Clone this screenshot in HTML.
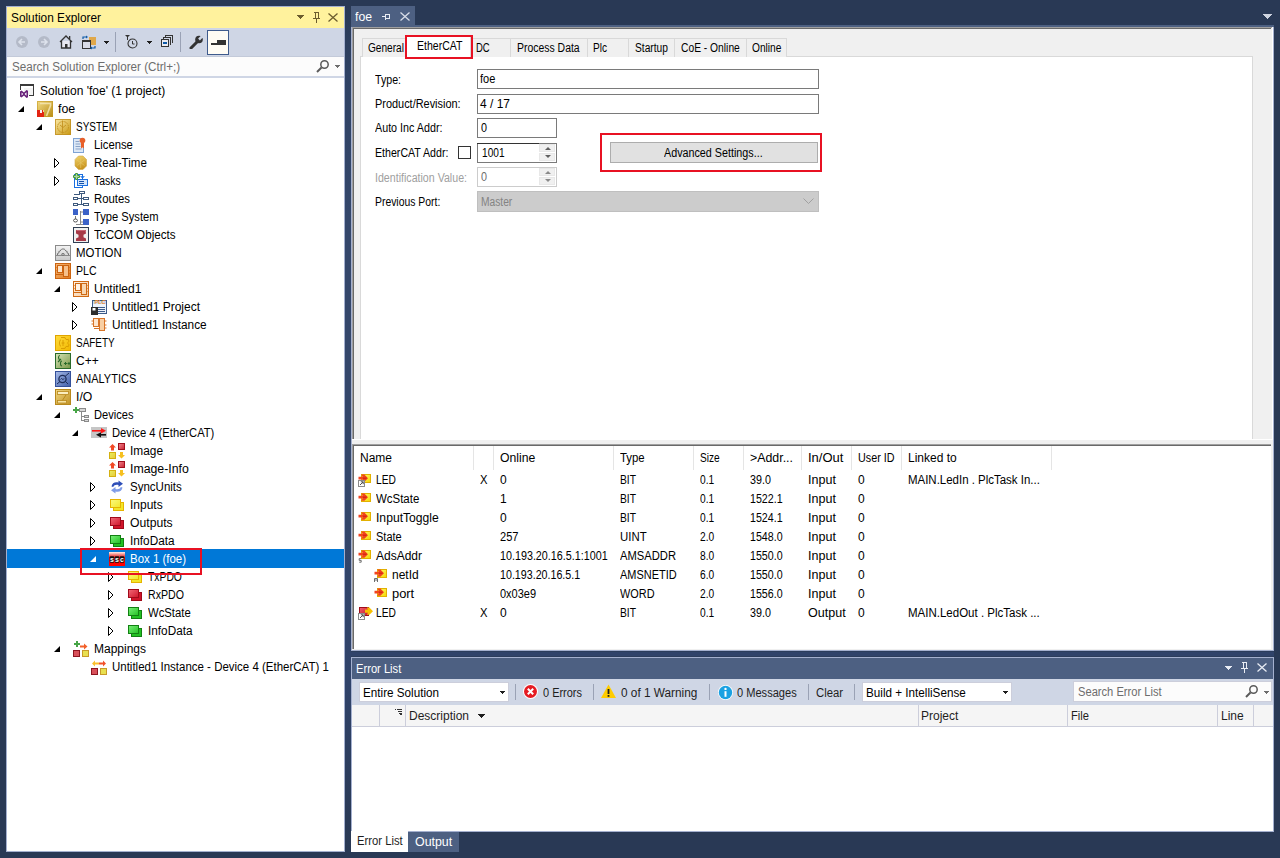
<!DOCTYPE html>
<html><head><meta charset="utf-8"><style>
html,body{margin:0;padding:0;width:1280px;height:858px;overflow:hidden;background:#293955;font-family:"Liberation Sans",sans-serif;}
.t{position:absolute;white-space:nowrap;}
svg{display:block}
</style></head><body>
<div style="position:absolute;left:6px;top:6px;width:339px;height:846px;background:#a4b0cf"></div><div style="position:absolute;left:7px;top:7px;width:337px;height:21px;background:#fff29d"></div><div class="t" style="left:11px;top:9px;font-size:12px;line-height:18px;color:#000;transform:scaleX(0.985);transform-origin:0 0;">Solution Explorer</div><div style="position:absolute;left:296px;top:15px;line-height:0"><svg width="8" height="5" viewBox="0 0 8 5" shape-rendering="crispEdges"><path d="M0 0h8l-4 4z" fill="#6b5c2e"/></svg></div><div style="position:absolute;left:313px;top:12px;line-height:0"><svg width="8" height="11" viewBox="0 0 8 11" shape-rendering="crispEdges"><path d="M2 0h4v1h-0.5v5h1.5v1H0V6h1.5V1H1V0z" fill="#6b5c2e"/><rect x="3" y="7" width="1" height="4" fill="#6b5c2e"/><rect x="2.5" y="1" width="3" height="5" fill="#fff29d"/><rect x="4.5" y="1" width="1" height="5" fill="#6b5c2e"/></svg></div><div style="position:absolute;left:328px;top:13px;line-height:0"><svg width="10" height="9" viewBox="0 0 10 9" shape-rendering="auto"><path d="M0.5 0.5l9 8M9.5 0.5l-9 8" stroke="#6b5c2e" stroke-width="1.3" fill="none"/></svg></div><div style="position:absolute;left:7px;top:28px;width:337px;height:28px;background:#cfd6e5"></div><div style="position:absolute;left:16px;top:36px;line-height:0"><svg width="12" height="12" viewBox="0 0 12 12" shape-rendering="auto"><circle cx="6" cy="6" r="6" fill="#b4bac8"/><path d="M9 6H3.5M6 3L3 6l3 3" stroke="#dde2ec" stroke-width="1.6" fill="none"/></svg></div><div style="position:absolute;left:38px;top:36px;line-height:0"><svg width="12" height="12" viewBox="0 0 12 12" shape-rendering="auto"><circle cx="6" cy="6" r="6" fill="#b4bac8"/><path d="M3 6h5.5M6 3l3 3-3 3" stroke="#dde2ec" stroke-width="1.6" fill="none"/></svg></div><div style="position:absolute;left:59px;top:35px;line-height:0"><svg width="14" height="14" viewBox="0 0 14 14" shape-rendering="auto"><path d="M1 7L7 1l6 6" stroke="#333" stroke-width="1.3" fill="none"/><path d="M2.5 6v7h9V6" fill="#e8e8f0" stroke="#333" stroke-width="1.3"/><rect x="6" y="9" width="2.5" height="4" fill="#333"/><rect x="10" y="1" width="1.3" height="3" fill="#333"/></svg></div><div style="position:absolute;left:82px;top:35px;line-height:0"><svg width="14" height="15" viewBox="0 0 14 15" shape-rendering="auto"><rect x="0.5" y="5.5" width="8" height="8" fill="#d8dbe6" stroke="#333"/><rect x="0.5" y="5.5" width="8" height="1.5" fill="#333"/><path d="M7 2h7v8H9V5H7z" fill="#e0a84a"/><path d="M1 4V2h3" stroke="#0e5aa7" stroke-width="1.2" fill="none"/><path d="M4 0.5l2 1.5-2 1.5z" fill="#0e5aa7"/><path d="M13 11v2h-3" stroke="#0e5aa7" stroke-width="1.2" fill="none"/><path d="M10 11.5l-2 1.5 2 1.5z" fill="#0e5aa7"/></svg></div><div style="position:absolute;left:103px;top:41px;line-height:0"><svg width="6" height="3" viewBox="0 0 6 3" shape-rendering="crispEdges"><path d="M0 0h6l-3 3z" fill="#1e1e1e"/></svg></div><div style="position:absolute;left:115px;top:32px;width:1px;height:20px;background:#9aa2b5"></div><div style="position:absolute;left:125px;top:35px;line-height:0"><svg width="14" height="14" viewBox="0 0 14 14" shape-rendering="auto"><path d="M0 0h5l-2.5 2.5z" fill="#333"/><rect x="2" y="2" width="1" height="3" fill="#333"/><circle cx="7.5" cy="8.5" r="4.5" fill="none" stroke="#333" stroke-width="1.1"/><path d="M7.5 6v3h2" stroke="#333" fill="none"/></svg></div><div style="position:absolute;left:146px;top:41px;line-height:0"><svg width="6" height="3" viewBox="0 0 6 3" shape-rendering="crispEdges"><path d="M0 0h6l-3 3z" fill="#1e1e1e"/></svg></div><div style="position:absolute;left:161px;top:35px;line-height:0"><svg width="12" height="12" viewBox="0 0 12 12" shape-rendering="crispEdges"><rect x="0.5" y="4.5" width="7" height="7" fill="#e8eaf2" stroke="#333"/><path d="M2.5 3.5V2.5h7v7h-1M4.5 1.5V0.5h7v7h-1" stroke="#333" fill="none"/><rect x="2" y="7" width="4" height="1.5" fill="#0e5aa7"/></svg></div><div style="position:absolute;left:180px;top:32px;width:1px;height:20px;background:#9aa2b5"></div><div style="position:absolute;left:189px;top:35px;line-height:0"><svg width="14" height="14" viewBox="0 0 14 14" shape-rendering="auto"><path d="M2 13l6-6" stroke="#333" stroke-width="3" stroke-linecap="round"/><circle cx="10" cy="4.5" r="3.8" fill="#333"/><path d="M10 4.5l4-4" stroke="#cfd6e5" stroke-width="2.5"/></svg></div><div style="position:absolute;left:207px;top:30px;width:20px;height:23px;background:#fffcf4;border:1px solid #3f5b8c"></div><div style="position:absolute;left:211px;top:40px;line-height:0"><svg width="15" height="5" viewBox="0 0 15 5" shape-rendering="crispEdges"><rect x="0" y="3" width="15" height="1.5" fill="#333"/><rect x="6" y="0" width="9" height="4" fill="#333"/></svg></div><div style="position:absolute;left:7px;top:56px;width:337px;height:1px;background:#c3cad9"></div><div style="position:absolute;left:7px;top:57px;width:337px;height:19px;background:#fcfcfc"></div><div class="t" style="left:12px;top:58px;font-size:12px;line-height:18px;color:#6d6d6d;transform:scaleX(0.971);transform-origin:0 0;">Search Solution Explorer (Ctrl+;)</div><div style="position:absolute;left:316px;top:60px;line-height:0"><svg width="13" height="13" viewBox="0 0 13 13" shape-rendering="auto"><circle cx="8.5" cy="4.5" r="3.7" fill="none" stroke="#5a5a5a" stroke-width="1.5"/><path d="M1 12l4.5-4.5" stroke="#5a5a5a" stroke-width="2"/></svg></div><div style="position:absolute;left:334px;top:65px;line-height:0"><svg width="6" height="3" viewBox="0 0 6 3" shape-rendering="crispEdges"><path d="M0 0h6l-3 3z" fill="#6d6d6d"/></svg></div><div style="position:absolute;left:7px;top:76px;width:337px;height:2px;background:#cfd6e5"></div><div style="position:absolute;left:7px;top:78px;width:337px;height:773px;background:#fff"></div><div style="position:absolute;left:20px;top:84px;line-height:0"><svg width="14" height="14" viewBox="0 0 14 14"><rect x="4" y="4" width="9" height="7" fill="#f3f3f3"/><rect x="0" y="0" width="14" height="2" fill="#3a3a3a"/><rect x="0" y="2" width="1" height="4" fill="#3a3a3a"/><rect x="13" y="2" width="1" height="10" fill="#3a3a3a"/><rect x="9" y="11" width="5" height="1" fill="#3a3a3a"/><path d="M0 7.5L1.5 6.5 4 8.5 6.5 6 8 6.8V13.2L6.5 14 4 11.5 1.5 13.5 0 12.5z" fill="#68217a"/><path d="M1.6 8.4v3.2l1.6-1.6zM6.5 8.2v3.6L4.6 10z" fill="#fff"/></svg></div><div class="t" style="left:40px;top:82px;font-size:12px;line-height:18px;color:#000;">Solution 'foe' (1 project)</div><div style="position:absolute;left:18px;top:106px;line-height:0"><svg width="6" height="6" viewBox="0 0 6 6" shape-rendering="auto"><path d="M6 0v6H0z" fill="#000"/></svg></div><div style="position:absolute;left:37px;top:101px;line-height:0"><svg width="16" height="16" viewBox="0 0 16 16"><defs><linearGradient id="g1" x1="0" y1="0" x2="1" y2="1"><stop offset="0" stop-color="#f3dc86"/><stop offset="1" stop-color="#b78a12"/></linearGradient></defs><rect x="0" y="0" width="16" height="16" fill="url(#g1)"/><rect x="0.5" y="0.5" width="15" height="15" fill="none" stroke="#c49a22" stroke-opacity="0.6"/><path d="M3 2.5h10.5v2L9.5 15" fill="none" stroke="#f6e9b8" stroke-width="1.6" stroke-opacity="0.8"/><rect x="0" y="9" width="7" height="7" fill="#e32412"/><rect x="3" y="9" width="2" height="3" fill="#f4f4f4"/><rect x="6" y="9" width="1" height="2" fill="#f0d8a0"/></svg></div><div class="t" style="left:58px;top:100px;font-size:12px;line-height:18px;color:#000;transform:scaleX(1.031);transform-origin:0 0;">foe</div><div style="position:absolute;left:36px;top:124px;line-height:0"><svg width="6" height="6" viewBox="0 0 6 6" shape-rendering="auto"><path d="M6 0v6H0z" fill="#000"/></svg></div><div style="position:absolute;left:55px;top:119px;line-height:0"><svg width="16" height="16" viewBox="0 0 16 16"><defs><linearGradient id="g2" x1="0" y1="0" x2="1" y2="1"><stop offset="0" stop-color="#fbeaa8"/><stop offset="1" stop-color="#c8960e"/></linearGradient></defs><rect x="0" y="0" width="16" height="16" fill="url(#g2)"/><rect x="0.5" y="0.5" width="15" height="15" fill="none" stroke="#c09020" stroke-opacity="0.8"/><path d="M8 2.5a5.5 5.5 0 1 0 0.01 0" fill="none" stroke="#c49220" stroke-width="1" stroke-dasharray="1.6 0.8"/><path d="M7.5 1.5v13M5 6l3 2.5L11 6" fill="none" stroke="#c49220" stroke-width="0.9"/></svg></div><div class="t" style="left:76px;top:118px;font-size:12px;line-height:18px;color:#000;transform:scaleX(0.831);transform-origin:0 0;">SYSTEM</div><div style="position:absolute;left:73px;top:137px;line-height:0"><svg width="16" height="16" viewBox="0 0 16 16"><rect x="0.5" y="1.5" width="10" height="14" fill="#dde8f6" stroke="#7fa3d4"/><path d="M2.5 4.5h4M2.5 7h5M2.5 9.5h5M2.5 12h6" stroke="#8aa4c8"/><circle cx="9.5" cy="3.5" r="2.8" fill="#e8602a"/><path d="M8 5.5v6l1.5-1.3 1.5 1.3v-6z" fill="#e8602a"/></svg></div><div class="t" style="left:94px;top:136px;font-size:12px;line-height:18px;color:#000;transform:scaleX(0.940);transform-origin:0 0;">License</div><div style="position:absolute;left:54px;top:158px;line-height:0"><svg width="6" height="10" viewBox="0 0 6 10" shape-rendering="auto"><path d="M0.5 0.5v9L5 5z" fill="none" stroke="#000" stroke-width="1" stroke-linejoin="miter"/></svg></div><div style="position:absolute;left:73px;top:155px;line-height:0"><svg width="16" height="16" viewBox="0 0 16 16"><defs><linearGradient id="g3" x1="0" y1="0" x2="0.3" y2="1"><stop offset="0" stop-color="#f2d46a"/><stop offset="1" stop-color="#c89420"/></linearGradient></defs><path d="M5.5 1h4.5l3.5 3.5v6.5L10 14.5H5.5L2 11V4.5z" fill="url(#g3)" stroke="#d0a848" stroke-width="0.6"/><path d="M7.7 2.5v10.5M4 5l7.5 5.5M4 10.5L11.5 5" stroke="#e6c868" stroke-width="0.6"/></svg></div><div class="t" style="left:94px;top:154px;font-size:12px;line-height:18px;color:#000;transform:scaleX(0.962);transform-origin:0 0;">Real-Time</div><div style="position:absolute;left:54px;top:176px;line-height:0"><svg width="6" height="10" viewBox="0 0 6 10" shape-rendering="auto"><path d="M0.5 0.5v9L5 5z" fill="none" stroke="#000" stroke-width="1" stroke-linejoin="miter"/></svg></div><div style="position:absolute;left:73px;top:173px;line-height:0"><svg width="16" height="16" viewBox="0 0 16 16"><rect x="1.5" y="1.5" width="8" height="13" fill="#fff" stroke="#1a6fe0"/><path d="M7 3.2h5l-2.5 2.3z" fill="#1a6fe0"/><rect x="4.5" y="6.5" width="10" height="6" fill="#d4e6fc" stroke="#1a6fe0"/><path d="M6 8.5h5M6 10.5h5" stroke="#1450a8"/><path d="M2.5 0.5h2v2h2v2h-2v2h-2v-2h-2v-2h2z" fill="#a8d8a0" stroke="#46983c"/></svg></div><div class="t" style="left:94px;top:172px;font-size:12px;line-height:18px;color:#000;transform:scaleX(0.867);transform-origin:0 0;">Tasks</div><div style="position:absolute;left:73px;top:191px;line-height:0"><svg width="16" height="16" viewBox="0 0 16 16" shape-rendering="crispEdges"><rect x="6.5" y="0.5" width="5" height="2" fill="none" stroke="#3e5a7e"/><rect x="0.5" y="6.5" width="4" height="2" fill="none" stroke="#3e5a7e"/><rect x="0.5" y="12.5" width="4" height="2" fill="none" stroke="#3e5a7e"/><rect x="10.5" y="6.5" width="5" height="2" fill="none" stroke="#3e5a7e"/><rect x="10.5" y="12.5" width="5" height="2" fill="none" stroke="#3e5a7e"/><path d="M8.5 3v11M4 7.5h6.5M4 13.5h6.5M0.5 3.5h6" stroke="#3e5a7e"/></svg></div><div class="t" style="left:94px;top:190px;font-size:12px;line-height:18px;color:#000;transform:scaleX(0.947);transform-origin:0 0;">Routes</div><div style="position:absolute;left:73px;top:209px;line-height:0"><svg width="16" height="16" viewBox="0 0 16 16"><rect x="0" y="0" width="5" height="6" fill="#3b62c8"/><rect x="10" y="0" width="6" height="6" fill="#3b62c8"/><rect x="10" y="10" width="6" height="6" fill="#3b62c8"/><path d="M7.5 2v13.5M3 15.5h7M7.5 3h2.5M7.5 13h2.5" stroke="#8a8a8a"/><path d="M2.5 7v3" stroke="#777"/><ellipse cx="2.5" cy="11.5" rx="2" ry="1.5" fill="none" stroke="#555"/></svg></div><div class="t" style="left:94px;top:208px;font-size:12px;line-height:18px;color:#000;transform:scaleX(0.931);transform-origin:0 0;">Type System</div><div style="position:absolute;left:73px;top:227px;line-height:0"><svg width="16" height="16" viewBox="0 0 16 16"><rect x="0.5" y="0.5" width="15" height="15" fill="#f0f0f0" stroke="#2f3e52"/><path d="M3 3h10v3.5l-2.5 1.2v2.6l2.5 1.2V14H3v-2.5l2.5-1.2V7.7L3 6.5z" fill="#a63a48"/><path d="M3.5 3.5h9v2" fill="none" stroke="#d07080" stroke-width="0.8"/></svg></div><div class="t" style="left:94px;top:226px;font-size:12px;line-height:18px;color:#000;transform:scaleX(0.972);transform-origin:0 0;">TcCOM Objects</div><div style="position:absolute;left:55px;top:245px;line-height:0"><svg width="16" height="16" viewBox="0 0 16 16"><defs><linearGradient id="g4" x1="0" y1="0" x2="0" y2="1"><stop offset="0" stop-color="#f4f4f4"/><stop offset="1" stop-color="#c8c8c8"/></linearGradient></defs><rect x="0.5" y="0.5" width="15" height="15" fill="url(#g4)" stroke="#8a8a8a"/><path d="M1 10.5h14" stroke="#8a8a8a"/><path d="M2.5 10V8.5L4 7.8 3.8 6.5 5.2 6 6 4.8 6.8 4h2.4l0.8 0.8L10.8 6l1.4 0.5L12 7.8l1.5 0.7V10" fill="none" stroke="#6a6a6a" stroke-width="0.9"/><ellipse cx="8" cy="9.3" rx="1.4" ry="0.9" fill="none" stroke="#6a6a6a" stroke-width="0.8"/></svg></div><div class="t" style="left:76px;top:244px;font-size:12px;line-height:18px;color:#000;transform:scaleX(0.952);transform-origin:0 0;">MOTION</div><div style="position:absolute;left:36px;top:268px;line-height:0"><svg width="6" height="6" viewBox="0 0 6 6" shape-rendering="auto"><path d="M6 0v6H0z" fill="#000"/></svg></div><div style="position:absolute;left:55px;top:263px;line-height:0"><svg width="16" height="16" viewBox="0 0 16 16"><defs><linearGradient id="g5" x1="0" y1="0" x2="1" y2="1"><stop offset="0" stop-color="#f6b878"/><stop offset="1" stop-color="#e07a1e"/></linearGradient></defs><rect x="0.5" y="0.5" width="15" height="15" fill="url(#g5)" stroke="#cc6410"/><rect x="2.5" y="2.5" width="5" height="7" fill="#fde4c8" stroke="#cc6410"/><rect x="8.5" y="2.5" width="5" height="11" fill="#f6c08a" stroke="#cc6410"/><path d="M0.5 11.5h8M1.5 4.5h1M1.5 7.5h1M13.5 4.5h1M13.5 7.5h1M13.5 10.5h1" stroke="#cc6410"/></svg></div><div class="t" style="left:76px;top:262px;font-size:12px;line-height:18px;color:#000;transform:scaleX(0.878);transform-origin:0 0;">PLC</div><div style="position:absolute;left:54px;top:286px;line-height:0"><svg width="6" height="6" viewBox="0 0 6 6" shape-rendering="auto"><path d="M6 0v6H0z" fill="#000"/></svg></div><div style="position:absolute;left:73px;top:281px;line-height:0"><svg width="16" height="16" viewBox="0 0 16 16"><defs><linearGradient id="g6" x1="0" y1="0" x2="1" y2="1"><stop offset="0" stop-color="#fff6ec"/><stop offset="1" stop-color="#f4c89a"/></linearGradient></defs><rect x="0.5" y="0.5" width="15" height="15" fill="url(#g6)" stroke="#d06a14"/><rect x="2.5" y="2.5" width="5" height="7" fill="#fff4e8" stroke="#d06a14"/><rect x="8.5" y="2.5" width="5" height="11" fill="#f8d8b4" stroke="#d06a14"/><path d="M0.5 11.5h8M1.5 4.5h1M1.5 7.5h1M13.5 4.5h1M13.5 7.5h1M13.5 10.5h1" stroke="#d06a14"/></svg></div><div class="t" style="left:94px;top:280px;font-size:12px;line-height:18px;color:#000;">Untitled1</div><div style="position:absolute;left:72px;top:302px;line-height:0"><svg width="6" height="10" viewBox="0 0 6 10" shape-rendering="auto"><path d="M0.5 0.5v9L5 5z" fill="none" stroke="#000" stroke-width="1" stroke-linejoin="miter"/></svg></div><div style="position:absolute;left:91px;top:299px;line-height:0"><svg width="16" height="16" viewBox="0 0 16 16"><rect x="1.5" y="1.5" width="14" height="13" fill="#eef3fa" stroke="#3c5b8a"/><rect x="2" y="2" width="13" height="3" fill="#c8d8f0"/><text x="9" y="5" font-family="Liberation Sans" font-size="5.5" font-weight="bold" text-anchor="middle" fill="#f08a1a">PLC</text><path d="M7 8.5h7M7 10.5h7M7 12.5h7" stroke="#3c5b8a"/><rect x="0" y="8" width="7" height="8" fill="#2d2d2d"/><rect x="1.5" y="9" width="3" height="2.5" fill="#fff"/></svg></div><div class="t" style="left:112px;top:298px;font-size:12px;line-height:18px;color:#000;">Untitled1 Project</div><div style="position:absolute;left:72px;top:320px;line-height:0"><svg width="6" height="10" viewBox="0 0 6 10" shape-rendering="auto"><path d="M0.5 0.5v9L5 5z" fill="none" stroke="#000" stroke-width="1" stroke-linejoin="miter"/></svg></div><div style="position:absolute;left:91px;top:317px;line-height:0"><svg width="16" height="16" viewBox="0 0 16 16"><rect x="2.5" y="1.5" width="5" height="8" fill="#fde6cf" stroke="#d87428"/><rect x="8.5" y="1.5" width="5" height="12" fill="#f8cfa4" stroke="#d87428"/><path d="M0.5 4h2M0.5 7h2M13.5 4h2M13.5 8h2M13.5 11h2M3 11.5h5" stroke="#d87428"/></svg></div><div class="t" style="left:112px;top:316px;font-size:12px;line-height:18px;color:#000;transform:scaleX(0.985);transform-origin:0 0;">Untitled1 Instance</div><div style="position:absolute;left:55px;top:335px;line-height:0"><svg width="16" height="16" viewBox="0 0 16 16"><defs><linearGradient id="g7" x1="0" y1="0" x2="1" y2="1"><stop offset="0" stop-color="#ffdc3c"/><stop offset="1" stop-color="#f2b800"/></linearGradient></defs><rect x="0.5" y="0.5" width="15" height="15" fill="url(#g7)" stroke="#e0a400"/><path d="M6 2.5h4l0.5 1.5 1.5 0.8 1.2-0.6 0.8 2-1 1v1.6l1 1-0.8 2-1.2-0.6-1.5 0.8L10 13.5H6" fill="none" stroke="#d89a00" stroke-width="0.9"/><path d="M6 4.5c-2 1-2 6 0 7M8 5v6M6.5 8h3" fill="none" stroke="#d89a00" stroke-width="0.9"/></svg></div><div class="t" style="left:76px;top:334px;font-size:12px;line-height:18px;color:#000;transform:scaleX(0.829);transform-origin:0 0;">SAFETY</div><div style="position:absolute;left:55px;top:353px;line-height:0"><svg width="16" height="16" viewBox="0 0 16 16"><defs><linearGradient id="g8" x1="0" y1="0" x2="1" y2="1"><stop offset="0" stop-color="#d8e4b8"/><stop offset="1" stop-color="#789848"/></linearGradient></defs><rect x="0.5" y="0.5" width="15" height="15" fill="url(#g8)" stroke="#2a6a2a"/><path d="M5 2.5c-2 0-2 4 0 4M3 9l3-3M7 8c-2 0-2 5 0 5" fill="none" stroke="#2a6a2a" stroke-width="1.1"/><path d="M9 10.5h3M10.5 9v3M12.5 10.5h3M14 9v3" stroke="#2a6a2a"/></svg></div><div class="t" style="left:76px;top:352px;font-size:12px;line-height:18px;color:#000;">C++</div><div style="position:absolute;left:55px;top:371px;line-height:0"><svg width="16" height="16" viewBox="0 0 16 16"><defs><linearGradient id="g9" x1="0" y1="0" x2="1" y2="1"><stop offset="0" stop-color="#a8bce8"/><stop offset="1" stop-color="#3e5ca8"/></linearGradient></defs><rect x="0.5" y="0.5" width="15" height="15" fill="url(#g9)" stroke="#34509a"/><circle cx="7.5" cy="8" r="3.6" fill="none" stroke="#1e2e5a" stroke-width="1.3"/><path d="M5.5 8.5l1.2-1.2 1.2 1.5 1.2-1.5" fill="none" stroke="#1e2e5a" stroke-width="0.9"/><path d="M2 13l3-2.5M10 5.5l4-3.5M10 10l3 3" stroke="#1e2e5a" stroke-width="1"/></svg></div><div class="t" style="left:76px;top:370px;font-size:12px;line-height:18px;color:#000;transform:scaleX(0.915);transform-origin:0 0;">ANALYTICS</div><div style="position:absolute;left:36px;top:394px;line-height:0"><svg width="6" height="6" viewBox="0 0 6 6" shape-rendering="auto"><path d="M6 0v6H0z" fill="#000"/></svg></div><div style="position:absolute;left:55px;top:389px;line-height:0"><svg width="16" height="16" viewBox="0 0 16 16"><defs><linearGradient id="g10" x1="0" y1="0" x2="1" y2="1"><stop offset="0" stop-color="#f2d880"/><stop offset="1" stop-color="#c09226"/></linearGradient></defs><rect x="0.5" y="0.5" width="15" height="15" fill="url(#g10)" stroke="#b8881c"/><rect x="2.5" y="2.5" width="11" height="3" fill="#fbeec0" stroke="#b8881c" stroke-width="0.8"/><path d="M11 6l-4 6" stroke="#b8881c"/><rect x="2.5" y="11.5" width="9" height="2.5" fill="#f6e2a0" stroke="#b8881c" stroke-width="0.8"/></svg></div><div class="t" style="left:76px;top:388px;font-size:12px;line-height:18px;color:#000;transform:scaleX(1.018);transform-origin:0 0;">I/O</div><div style="position:absolute;left:54px;top:412px;line-height:0"><svg width="6" height="6" viewBox="0 0 6 6" shape-rendering="auto"><path d="M6 0v6H0z" fill="#000"/></svg></div><div style="position:absolute;left:73px;top:407px;line-height:0"><svg width="16" height="16" viewBox="0 0 16 16" shape-rendering="crispEdges"><rect x="6.5" y="1.5" width="6" height="3" fill="#d6d6d6" stroke="#8a8a8a"/><path d="M8.5 5v9M8.5 9.5h3M8.5 13.5h3" stroke="#8a8a8a"/><rect x="11.5" y="8.5" width="4" height="2" fill="#d6d6d6" stroke="#8a8a8a"/><rect x="11.5" y="12.5" width="4" height="2" fill="#d6d6d6" stroke="#8a8a8a"/><rect x="0" y="2" width="6" height="2" fill="#46a546"/><rect x="2" y="0" width="2" height="6" fill="#46a546"/></svg></div><div class="t" style="left:94px;top:406px;font-size:12px;line-height:18px;color:#000;transform:scaleX(0.925);transform-origin:0 0;">Devices</div><div style="position:absolute;left:72px;top:430px;line-height:0"><svg width="6" height="6" viewBox="0 0 6 6" shape-rendering="auto"><path d="M6 0v6H0z" fill="#000"/></svg></div><div style="position:absolute;left:91px;top:427px;line-height:0"><svg width="16" height="16" viewBox="0 0 16 16"><rect x="0" y="0" width="16" height="11" fill="#c6c6c6"/><rect x="1" y="3" width="11" height="1.6" fill="#ff1a1a"/><path d="M10 1l5 2.8L10 6.6z" fill="#ff1a1a"/><rect x="7" y="7" width="8" height="1.6" fill="#111"/><path d="M10 5.2L5 7.8 10 10.4z" fill="#111"/></svg></div><div class="t" style="left:112px;top:424px;font-size:12px;line-height:18px;color:#000;transform:scaleX(0.932);transform-origin:0 0;">Device 4 (EtherCAT)</div><div style="position:absolute;left:109px;top:443px;line-height:0"><svg width="16" height="16" viewBox="0 0 16 16"><defs><linearGradient id="g11" x1="0" y1="0" x2="1" y2="1"><stop offset="0" stop-color="#f28890"/><stop offset="1" stop-color="#c8202e"/></linearGradient></defs><defs><linearGradient id="g12" x1="0" y1="0" x2="1" y2="1"><stop offset="0" stop-color="#e8f060"/><stop offset="1" stop-color="#e8c838"/></linearGradient></defs><path d="M0 4.5L3.5 1 7 4.5H5V7.5H2V4.5z" fill="#f24a26"/><rect x="9.5" y="0.5" width="6" height="6" fill="url(#g11)" stroke="#a0101c"/><rect x="0.5" y="9.5" width="6" height="6" fill="url(#g12)" stroke="#d4b010"/><path d="M9 12L12.5 15.5 16 12H14V9H11V12z" fill="#f6c020"/></svg></div><div class="t" style="left:130px;top:442px;font-size:12px;line-height:18px;color:#000;transform:scaleX(0.989);transform-origin:0 0;">Image</div><div style="position:absolute;left:109px;top:461px;line-height:0"><svg width="16" height="16" viewBox="0 0 16 16"><defs><linearGradient id="g13" x1="0" y1="0" x2="1" y2="1"><stop offset="0" stop-color="#f28890"/><stop offset="1" stop-color="#c8202e"/></linearGradient></defs><defs><linearGradient id="g14" x1="0" y1="0" x2="1" y2="1"><stop offset="0" stop-color="#e8f060"/><stop offset="1" stop-color="#e8c838"/></linearGradient></defs><path d="M0 4.5L3.5 1 7 4.5H5V7.5H2V4.5z" fill="#f24a26"/><rect x="9.5" y="0.5" width="6" height="6" fill="url(#g13)" stroke="#a0101c"/><rect x="0.5" y="9.5" width="6" height="6" fill="url(#g14)" stroke="#d4b010"/><path d="M9 12L12.5 15.5 16 12H14V9H11V12z" fill="#f6c020"/></svg></div><div class="t" style="left:130px;top:460px;font-size:12px;line-height:18px;color:#000;transform:scaleX(1.025);transform-origin:0 0;">Image-Info</div><div style="position:absolute;left:90px;top:482px;line-height:0"><svg width="6" height="10" viewBox="0 0 6 10" shape-rendering="auto"><path d="M0.5 0.5v9L5 5z" fill="none" stroke="#000" stroke-width="1" stroke-linejoin="miter"/></svg></div><div style="position:absolute;left:109px;top:479px;line-height:0"><svg width="16" height="16" viewBox="0 0 16 16"><path d="M2.5 7.5C3 4 6 2.5 9.5 3.5V1.5L14 4.8 9.5 8V6C7 5.5 5 6 4.2 8z" fill="#2f4fb8"/><path d="M13.5 8.5C13 12 10 13.5 6.5 12.5V14.5L2 11.2 6.5 8V10C9 10.5 11 10 11.8 8z" fill="#7f9ce8"/></svg></div><div class="t" style="left:130px;top:478px;font-size:12px;line-height:18px;color:#000;transform:scaleX(0.959);transform-origin:0 0;">SyncUnits</div><div style="position:absolute;left:90px;top:500px;line-height:0"><svg width="6" height="10" viewBox="0 0 6 10" shape-rendering="auto"><path d="M0.5 0.5v9L5 5z" fill="none" stroke="#000" stroke-width="1" stroke-linejoin="miter"/></svg></div><div style="position:absolute;left:109px;top:497px;line-height:0"><svg width="16" height="16" viewBox="0 0 16 16"><defs><linearGradient id="g15" x1="0" y1="0" x2="1" y2="1"><stop offset="0" stop-color="#fafa80"/><stop offset="1" stop-color="#f2e628"/></linearGradient></defs><rect x="4.5" y="5.5" width="10" height="8" fill="#f2e628" stroke="#e6b400"/><rect x="1.5" y="2.5" width="10" height="8" fill="url(#g15)" stroke="#e6b400"/></svg></div><div class="t" style="left:130px;top:496px;font-size:12px;line-height:18px;color:#000;">Inputs</div><div style="position:absolute;left:90px;top:518px;line-height:0"><svg width="6" height="10" viewBox="0 0 6 10" shape-rendering="auto"><path d="M0.5 0.5v9L5 5z" fill="none" stroke="#000" stroke-width="1" stroke-linejoin="miter"/></svg></div><div style="position:absolute;left:109px;top:515px;line-height:0"><svg width="16" height="16" viewBox="0 0 16 16"><defs><linearGradient id="g16" x1="0" y1="0" x2="1" y2="1"><stop offset="0" stop-color="#f06a78"/><stop offset="1" stop-color="#d0142a"/></linearGradient></defs><rect x="4.5" y="5.5" width="10" height="8" fill="#d0142a" stroke="#a00a1a"/><rect x="1.5" y="2.5" width="10" height="8" fill="url(#g16)" stroke="#a00a1a"/></svg></div><div class="t" style="left:130px;top:514px;font-size:12px;line-height:18px;color:#000;transform:scaleX(1.016);transform-origin:0 0;">Outputs</div><div style="position:absolute;left:90px;top:536px;line-height:0"><svg width="6" height="10" viewBox="0 0 6 10" shape-rendering="auto"><path d="M0.5 0.5v9L5 5z" fill="none" stroke="#000" stroke-width="1" stroke-linejoin="miter"/></svg></div><div style="position:absolute;left:109px;top:533px;line-height:0"><svg width="16" height="16" viewBox="0 0 16 16"><defs><linearGradient id="g17" x1="0" y1="0" x2="1" y2="1"><stop offset="0" stop-color="#7af07a"/><stop offset="1" stop-color="#22c022"/></linearGradient></defs><rect x="4.5" y="5.5" width="10" height="8" fill="#22c022" stroke="#128012"/><rect x="1.5" y="2.5" width="10" height="8" fill="url(#g17)" stroke="#128012"/></svg></div><div class="t" style="left:130px;top:532px;font-size:12px;line-height:18px;color:#000;transform:scaleX(0.981);transform-origin:0 0;">InfoData</div><div style="position:absolute;left:7px;top:549px;width:337px;height:19px;background:#0078d7"></div><div style="position:absolute;left:90px;top:556px;line-height:0"><svg width="6" height="6" viewBox="0 0 6 6" shape-rendering="auto"><path d="M6 0v6H0z" fill="#fff"/></svg></div><div style="position:absolute;left:109px;top:552px;line-height:0"><svg width="16" height="14" viewBox="0 0 16 14"><defs><linearGradient id="g18" x1="0" y1="0" x2="0" y2="1"><stop offset="0" stop-color="#fff0ea"/><stop offset="1" stop-color="#e00000"/></linearGradient></defs><rect x="0" y="0" width="16" height="14" fill="#ff0000"/><rect x="0" y="0" width="16" height="6" fill="url(#g18)"/><rect x="0.8" y="4.2" width="4.4" height="6.5" rx="1" fill="#111"/><rect x="5.8" y="4.2" width="4.4" height="6.5" rx="1" fill="#111"/><rect x="10.8" y="4.2" width="4.4" height="6.5" rx="1" fill="#111"/><text x="3" y="9.8" font-family="Liberation Sans" font-size="7" font-weight="bold" text-anchor="middle" fill="#fff">s</text><text x="8" y="9.8" font-family="Liberation Sans" font-size="7" font-weight="bold" text-anchor="middle" fill="#fff">s</text><text x="13" y="9.8" font-family="Liberation Sans" font-size="7" font-weight="bold" text-anchor="middle" fill="#fff">c</text></svg></div><div class="t" style="left:130px;top:550px;font-size:12px;line-height:18px;color:#fff;transform:scaleX(0.954);transform-origin:0 0;">Box 1 (foe)</div><div style="position:absolute;left:108px;top:572px;line-height:0"><svg width="6" height="10" viewBox="0 0 6 10" shape-rendering="auto"><path d="M0.5 0.5v9L5 5z" fill="none" stroke="#000" stroke-width="1" stroke-linejoin="miter"/></svg></div><div style="position:absolute;left:127px;top:569px;line-height:0"><svg width="16" height="16" viewBox="0 0 16 16"><defs><linearGradient id="g19" x1="0" y1="0" x2="1" y2="1"><stop offset="0" stop-color="#fafa80"/><stop offset="1" stop-color="#f2e628"/></linearGradient></defs><rect x="4.5" y="5.5" width="10" height="8" fill="#f2e628" stroke="#e6b400"/><rect x="1.5" y="2.5" width="10" height="8" fill="url(#g19)" stroke="#e6b400"/></svg></div><div class="t" style="left:148px;top:568px;font-size:12px;line-height:18px;color:#000;transform:scaleX(0.862);transform-origin:0 0;">TxPDO</div><div style="position:absolute;left:108px;top:590px;line-height:0"><svg width="6" height="10" viewBox="0 0 6 10" shape-rendering="auto"><path d="M0.5 0.5v9L5 5z" fill="none" stroke="#000" stroke-width="1" stroke-linejoin="miter"/></svg></div><div style="position:absolute;left:127px;top:587px;line-height:0"><svg width="16" height="16" viewBox="0 0 16 16"><defs><linearGradient id="g20" x1="0" y1="0" x2="1" y2="1"><stop offset="0" stop-color="#f06a78"/><stop offset="1" stop-color="#d0142a"/></linearGradient></defs><rect x="4.5" y="5.5" width="10" height="8" fill="#d0142a" stroke="#a00a1a"/><rect x="1.5" y="2.5" width="10" height="8" fill="url(#g20)" stroke="#a00a1a"/></svg></div><div class="t" style="left:148px;top:586px;font-size:12px;line-height:18px;color:#000;transform:scaleX(0.885);transform-origin:0 0;">RxPDO</div><div style="position:absolute;left:108px;top:608px;line-height:0"><svg width="6" height="10" viewBox="0 0 6 10" shape-rendering="auto"><path d="M0.5 0.5v9L5 5z" fill="none" stroke="#000" stroke-width="1" stroke-linejoin="miter"/></svg></div><div style="position:absolute;left:127px;top:605px;line-height:0"><svg width="16" height="16" viewBox="0 0 16 16"><defs><linearGradient id="g21" x1="0" y1="0" x2="1" y2="1"><stop offset="0" stop-color="#7af07a"/><stop offset="1" stop-color="#22c022"/></linearGradient></defs><rect x="4.5" y="5.5" width="10" height="8" fill="#22c022" stroke="#128012"/><rect x="1.5" y="2.5" width="10" height="8" fill="url(#g21)" stroke="#128012"/></svg></div><div class="t" style="left:148px;top:604px;font-size:12px;line-height:18px;color:#000;transform:scaleX(0.941);transform-origin:0 0;">WcState</div><div style="position:absolute;left:108px;top:626px;line-height:0"><svg width="6" height="10" viewBox="0 0 6 10" shape-rendering="auto"><path d="M0.5 0.5v9L5 5z" fill="none" stroke="#000" stroke-width="1" stroke-linejoin="miter"/></svg></div><div style="position:absolute;left:127px;top:623px;line-height:0"><svg width="16" height="16" viewBox="0 0 16 16"><defs><linearGradient id="g22" x1="0" y1="0" x2="1" y2="1"><stop offset="0" stop-color="#7af07a"/><stop offset="1" stop-color="#22c022"/></linearGradient></defs><rect x="4.5" y="5.5" width="10" height="8" fill="#22c022" stroke="#128012"/><rect x="1.5" y="2.5" width="10" height="8" fill="url(#g22)" stroke="#128012"/></svg></div><div class="t" style="left:148px;top:622px;font-size:12px;line-height:18px;color:#000;transform:scaleX(0.981);transform-origin:0 0;">InfoData</div><div style="position:absolute;left:54px;top:646px;line-height:0"><svg width="6" height="6" viewBox="0 0 6 6" shape-rendering="auto"><path d="M6 0v6H0z" fill="#000"/></svg></div><div style="position:absolute;left:73px;top:641px;line-height:0"><svg width="16" height="16" viewBox="0 0 16 16"><rect x="0.5" y="9.5" width="6" height="6" fill="#d8505a" stroke="#8c1420"/><rect x="9.5" y="9.5" width="6" height="6" fill="#e8e050" stroke="#c89a28"/><path d="M1 3h6M4 0v6" stroke="#46a546" stroke-width="2"/><path d="M7 4.5H11V2.5L14.5 5.5 11 8.5V6.5H7z" fill="#f2602a"/></svg></div><div class="t" style="left:94px;top:640px;font-size:12px;line-height:18px;color:#000;">Mappings</div><div style="position:absolute;left:91px;top:659px;line-height:0"><svg width="16" height="16" viewBox="0 0 16 16"><rect x="0.5" y="9.5" width="6" height="6" fill="#d8505a" stroke="#8c1420"/><rect x="9.5" y="9.5" width="6" height="6" fill="#e8e050" stroke="#c89a28"/><path d="M1 4.5L4 1.5V3.5H8V5.5H4V7.5z" fill="#fbc02d"/><path d="M15 4.5L12 1.5V3.5H8V5.5H12V7.5z" fill="#f2502a"/></svg></div><div class="t" style="left:112px;top:658px;font-size:12px;line-height:18px;color:#000;transform:scaleX(0.957);transform-origin:0 0;">Untitled1 Instance - Device 4 (EtherCAT) 1</div><div style="position:absolute;left:80px;top:548px;width:122px;height:27px;border:2px solid #e81123;box-sizing:border-box"></div><div style="position:absolute;left:351px;top:6px;width:64px;height:19px;background:#4d6082"></div><div class="t" style="left:355px;top:8px;font-size:12px;line-height:18px;color:#fff;transform:scaleX(1.019);transform-origin:0 0;">foe</div><div style="position:absolute;left:382px;top:13px;line-height:0"><svg width="9" height="8" viewBox="0 0 9 8" shape-rendering="crispEdges"><path d="M0 3.5h3M3 0.5v6" stroke="#e8ecf4" fill="none"/><rect x="3.5" y="1.5" width="4" height="4" fill="none" stroke="#e8ecf4"/></svg></div><div style="position:absolute;left:400px;top:12px;line-height:0"><svg width="10" height="9" viewBox="0 0 10 9" shape-rendering="auto"><path d="M0.5 0.5l9 8M9.5 0.5l-9 8" stroke="#d8dde8" stroke-width="1.3" fill="none"/></svg></div><div style="position:absolute;left:351px;top:25px;width:923px;height:2px;background:#4d6082"></div><div style="position:absolute;left:1263px;top:14px;line-height:0"><svg width="9" height="5" viewBox="0 0 9 5" shape-rendering="crispEdges"><path d="M0 0h9l-4.5 5z" fill="#ced4e0"/></svg></div><div style="position:absolute;left:351px;top:27px;width:923px;height:624px;background:#a4b0cf"></div><div style="position:absolute;left:352px;top:27px;width:921px;height:623px;background:#f0f0f0"></div><div style="position:absolute;left:352px;top:27px;width:920px;height:1px;background:#a0a0a0"></div><div style="position:absolute;left:352px;top:28px;width:919px;height:1px;background:#696969"></div><div style="position:absolute;left:352px;top:27px;width:1px;height:413px;background:#a0a0a0"></div><div style="position:absolute;left:353px;top:28px;width:1px;height:412px;background:#696969"></div><div style="position:absolute;left:1272px;top:27px;width:1px;height:413px;background:#fff"></div><div style="position:absolute;left:360px;top:56px;width:893px;height:383px;background:#fff;border:1px solid #d9d9d9;box-sizing:border-box;border-bottom:none"></div><div style="position:absolute;left:362px;top:38px;width:45px;height:19px;background:#f0f0f0;border:1px solid #d9d9d9;border-bottom:none;box-sizing:border-box"></div><div class="t" style="left:368px;top:39px;font-size:12px;line-height:18px;color:#000;transform:scaleX(0.843);transform-origin:0 0;">General</div><div style="position:absolute;left:470px;top:38px;width:41px;height:19px;background:#f0f0f0;border:1px solid #d9d9d9;border-bottom:none;box-sizing:border-box"></div><div class="t" style="left:475.5px;top:39px;font-size:12px;line-height:18px;color:#000;transform:scaleX(0.790);transform-origin:0 0;">DC</div><div style="position:absolute;left:510px;top:38px;width:78px;height:19px;background:#f0f0f0;border:1px solid #d9d9d9;border-bottom:none;box-sizing:border-box"></div><div class="t" style="left:517.3px;top:39px;font-size:12px;line-height:18px;color:#000;transform:scaleX(0.870);transform-origin:0 0;">Process Data</div><div style="position:absolute;left:587px;top:38px;width:42px;height:19px;background:#f0f0f0;border:1px solid #d9d9d9;border-bottom:none;box-sizing:border-box"></div><div class="t" style="left:593.3px;top:39px;font-size:12px;line-height:18px;color:#000;transform:scaleX(0.840);transform-origin:0 0;">Plc</div><div style="position:absolute;left:628px;top:38px;width:47px;height:19px;background:#f0f0f0;border:1px solid #d9d9d9;border-bottom:none;box-sizing:border-box"></div><div class="t" style="left:635px;top:39px;font-size:12px;line-height:18px;color:#000;transform:scaleX(0.853);transform-origin:0 0;">Startup</div><div style="position:absolute;left:674px;top:38px;width:73px;height:19px;background:#f0f0f0;border:1px solid #d9d9d9;border-bottom:none;box-sizing:border-box"></div><div class="t" style="left:680.6px;top:39px;font-size:12px;line-height:18px;color:#000;transform:scaleX(0.856);transform-origin:0 0;">CoE - Online</div><div style="position:absolute;left:746px;top:38px;width:41px;height:19px;background:#f0f0f0;border:1px solid #d9d9d9;border-bottom:none;box-sizing:border-box"></div><div class="t" style="left:751.6px;top:39px;font-size:12px;line-height:18px;color:#000;transform:scaleX(0.848);transform-origin:0 0;">Online</div><div style="position:absolute;left:406px;top:36px;width:65px;height:21px;background:#fff;border:1px solid #d9d9d9;border-bottom:none;box-sizing:border-box"></div><div class="t" style="left:417.3px;top:37px;font-size:12px;line-height:18px;color:#000;transform:scaleX(0.877);transform-origin:0 0;">EtherCAT</div><div style="position:absolute;left:405px;top:35px;width:68px;height:24px;border:2px solid #e81123;box-sizing:border-box"></div><div class="t" style="left:375px;top:71px;font-size:12px;line-height:18px;color:#000;transform:scaleX(0.886);transform-origin:0 0;">Type:</div><div class="t" style="left:375px;top:95px;font-size:12px;line-height:18px;color:#000;transform:scaleX(0.910);transform-origin:0 0;">Product/Revision:</div><div class="t" style="left:375px;top:119px;font-size:12px;line-height:18px;color:#000;transform:scaleX(0.895);transform-origin:0 0;">Auto Inc Addr:</div><div class="t" style="left:375px;top:144px;font-size:12px;line-height:18px;color:#000;transform:scaleX(0.885);transform-origin:0 0;">EtherCAT Addr:</div><div class="t" style="left:375px;top:168.5px;font-size:12px;line-height:18px;color:#a0a0a0;transform:scaleX(0.886);transform-origin:0 0;">Identification Value:</div><div class="t" style="left:375px;top:193px;font-size:12px;line-height:18px;color:#000;transform:scaleX(0.866);transform-origin:0 0;">Previous Port:</div><div style="position:absolute;left:477px;top:69px;width:342px;height:20px;background:#fff;border:1px solid #7a7a7a;box-sizing:border-box"></div><div class="t" style="left:480px;top:70px;font-size:12px;line-height:18px;color:#000;transform:scaleX(0.917);transform-origin:0 0;">foe</div><div style="position:absolute;left:477px;top:94px;width:342px;height:20px;background:#fff;border:1px solid #7a7a7a;box-sizing:border-box"></div><div class="t" style="left:480px;top:95px;font-size:12px;line-height:18px;color:#000;">4 / 17</div><div style="position:absolute;left:477px;top:118px;width:80px;height:20px;background:#fff;border:1px solid #7a7a7a;box-sizing:border-box"></div><div class="t" style="left:481px;top:119px;font-size:12px;line-height:18px;color:#000;transform:scaleX(0.897);transform-origin:0 0;">0</div><div style="position:absolute;left:477px;top:143px;width:80px;height:20px;background:#fff;border:1px solid #7a7a7a;box-sizing:border-box"></div><div class="t" style="left:482px;top:144px;font-size:12px;line-height:18px;color:#000;transform:scaleX(0.843);transform-origin:0 0;">1001</div><div style="position:absolute;left:477px;top:167px;width:80px;height:20px;background:#fff;border:1px solid #cccccc;box-sizing:border-box"></div><div class="t" style="left:481px;top:168px;font-size:12px;line-height:18px;color:#6d6d6d;transform:scaleX(0.897);transform-origin:0 0;">0</div><div style="position:absolute;left:477px;top:143px;width:62px;height:1px;background:#333"></div><div style="position:absolute;left:539px;top:144px;width:17px;height:18px;background:#fff"></div><div style="position:absolute;left:539px;top:144px;width:16px;height:8px;background:#f0f0f0;border:1px solid #e8e8e8;box-sizing:border-box"></div><div style="position:absolute;left:539px;top:153px;width:16px;height:8px;background:#f0f0f0;border:1px solid #e8e8e8;box-sizing:border-box"></div><div style="position:absolute;left:545px;top:147px;line-height:0"><svg width="6" height="3" viewBox="0 0 6 3" shape-rendering="auto"><path d="M0 3h6L3 0z" fill="#606060"/></svg></div><div style="position:absolute;left:545px;top:155px;line-height:0"><svg width="6" height="3" viewBox="0 0 6 3" shape-rendering="auto"><path d="M0 0h6L3 3z" fill="#606060"/></svg></div><div style="position:absolute;left:539px;top:168px;width:17px;height:18px;background:#fff"></div><div style="position:absolute;left:539px;top:168px;width:16px;height:8px;background:#f0f0f0;border:1px solid #e8e8e8;box-sizing:border-box"></div><div style="position:absolute;left:539px;top:177px;width:16px;height:8px;background:#f0f0f0;border:1px solid #e8e8e8;box-sizing:border-box"></div><div style="position:absolute;left:545px;top:171px;line-height:0"><svg width="6" height="3" viewBox="0 0 6 3" shape-rendering="auto"><path d="M0 3h6L3 0z" fill="#8a8a8a"/></svg></div><div style="position:absolute;left:545px;top:179px;line-height:0"><svg width="6" height="3" viewBox="0 0 6 3" shape-rendering="auto"><path d="M0 0h6L3 3z" fill="#8a8a8a"/></svg></div><div style="position:absolute;left:458px;top:146px;width:13px;height:13px;background:#fff;border:1px solid #333;box-sizing:border-box"></div><div style="position:absolute;left:610px;top:142px;width:208px;height:21px;background:#e1e1e1;border:1px solid #adadad;box-sizing:border-box"></div><div class="t" style="left:664px;top:144px;font-size:12px;line-height:18px;color:#000;transform:scaleX(0.896);transform-origin:0 0;">Advanced Settings...</div><div style="position:absolute;left:600px;top:133px;width:222px;height:39px;border:2px solid #e81123;box-sizing:border-box"></div><div style="position:absolute;left:477px;top:191px;width:342px;height:21px;background:#cccccc;border:1px solid #bfbfbf;box-sizing:border-box"></div><div class="t" style="left:481.4px;top:193px;font-size:12px;line-height:18px;color:#838383;transform:scaleX(0.853);transform-origin:0 0;">Master</div><div style="position:absolute;left:803px;top:198px;line-height:0"><svg width="11" height="7" viewBox="0 0 11 7" shape-rendering="auto"><path d="M0.5 0.5l5 5 5-5" stroke="#a0a0a0" fill="none"/></svg></div><div style="position:absolute;left:352px;top:439px;width:920px;height:6px;background:#f0f0f0"></div><div style="position:absolute;left:352px;top:439px;width:920px;height:1px;background:#fff"></div><div style="position:absolute;left:354px;top:440px;width:918px;height:4px;background:#f0f0f0"></div><div style="position:absolute;left:352px;top:444px;width:920px;height:1px;background:#a0a0a0"></div><div style="position:absolute;left:352px;top:445px;width:920px;height:1px;background:#696969"></div><div style="position:absolute;left:352px;top:444px;width:1px;height:205px;background:#a0a0a0"></div><div style="position:absolute;left:353px;top:445px;width:1px;height:204px;background:#696969"></div><div style="position:absolute;left:354px;top:446px;width:918px;height:203px;background:#fff"></div><div style="position:absolute;left:352px;top:649px;width:921px;height:1px;background:#f0f0f0"></div><div style="position:absolute;left:1271px;top:444px;width:1px;height:206px;background:#f0f0f0"></div><div style="position:absolute;left:473px;top:446px;width:1px;height:24px;background:#e5e5e5"></div><div class="t" style="left:360px;top:449px;font-size:12px;line-height:18px;color:#000;">Name</div><div style="position:absolute;left:493px;top:446px;width:1px;height:24px;background:#e5e5e5"></div><div style="position:absolute;left:613px;top:446px;width:1px;height:24px;background:#e5e5e5"></div><div class="t" style="left:500px;top:449px;font-size:12px;line-height:18px;color:#000;transform:scaleX(1.018);transform-origin:0 0;">Online</div><div style="position:absolute;left:693px;top:446px;width:1px;height:24px;background:#e5e5e5"></div><div class="t" style="left:620px;top:449px;font-size:12px;line-height:18px;color:#000;transform:scaleX(0.949);transform-origin:0 0;">Type</div><div style="position:absolute;left:743px;top:446px;width:1px;height:24px;background:#e5e5e5"></div><div class="t" style="left:700px;top:449px;font-size:12px;line-height:18px;color:#000;transform:scaleX(0.844);transform-origin:0 0;">Size</div><div style="position:absolute;left:801px;top:446px;width:1px;height:24px;background:#e5e5e5"></div><div class="t" style="left:750px;top:449px;font-size:12px;line-height:18px;color:#000;transform:scaleX(1.031);transform-origin:0 0;">&gt;Addr...</div><div style="position:absolute;left:851px;top:446px;width:1px;height:24px;background:#e5e5e5"></div><div class="t" style="left:808px;top:449px;font-size:12px;line-height:18px;color:#000;transform:scaleX(1.080);transform-origin:0 0;">In/Out</div><div style="position:absolute;left:901px;top:446px;width:1px;height:24px;background:#e5e5e5"></div><div class="t" style="left:858px;top:449px;font-size:12px;line-height:18px;color:#000;transform:scaleX(0.897);transform-origin:0 0;">User ID</div><div style="position:absolute;left:1051px;top:446px;width:1px;height:24px;background:#e5e5e5"></div><div class="t" style="left:908px;top:449px;font-size:12px;line-height:18px;color:#000;">Linked to</div><div style="position:absolute;left:357px;top:473px;line-height:0"><svg width="16" height="16" viewBox="0 0 16 16"><defs><linearGradient id="g23" x1="0" y1="0" x2="1" y2="1"><stop offset="0" stop-color="#ffff70"/><stop offset="1" stop-color="#f4d400"/></linearGradient></defs><rect x="4.5" y="1.5" width="9" height="8" fill="url(#g23)" stroke="#e2b000"/><path d="M1.5 3.8h4.2L4.2 1.6h3.2L11 5.2 7.4 8.8H4.2L5.7 6.6H1.5z" fill="#f2431e"/><path d="M6 5.2h3.5" stroke="#c01808" stroke-width="0.8"/><rect x="1.5" y="7.5" width="6" height="6" fill="#fff" stroke="#8a8a8a"/><path d="M3 12l3.2-3.2M3.8 8.8h2.4v2.4" stroke="#505050" fill="none"/></svg></div><div class="t" style="left:376px;top:471px;font-size:12px;line-height:18px;color:#000;transform:scaleX(0.852);transform-origin:0 0;">LED</div><div class="t" style="left:480px;top:471px;font-size:12px;line-height:18px;color:#000;transform:scaleX(0.936);transform-origin:0 0;">X</div><div class="t" style="left:500px;top:471px;font-size:12px;line-height:18px;color:#000;">0</div><div class="t" style="left:620px;top:471px;font-size:12px;line-height:18px;color:#000;transform:scaleX(0.857);transform-origin:0 0;">BIT</div><div class="t" style="left:700px;top:471px;font-size:12px;line-height:18px;color:#000;transform:scaleX(0.851);transform-origin:0 0;">0.1</div><div class="t" style="left:750px;top:471px;font-size:12px;line-height:18px;color:#000;transform:scaleX(0.895);transform-origin:0 0;">39.0</div><div class="t" style="left:808px;top:471px;font-size:12px;line-height:18px;color:#000;transform:scaleX(1.045);transform-origin:0 0;">Input</div><div class="t" style="left:858px;top:471px;font-size:12px;line-height:18px;color:#000;">0</div><div class="t" style="left:908px;top:471px;font-size:12px;line-height:18px;color:#000;transform:scaleX(0.955);transform-origin:0 0;">MAIN.LedIn . PlcTask In...</div><div style="position:absolute;left:357px;top:492px;line-height:0"><svg width="16" height="16" viewBox="0 0 16 16"><defs><linearGradient id="g24" x1="0" y1="0" x2="1" y2="1"><stop offset="0" stop-color="#ffff70"/><stop offset="1" stop-color="#f4d400"/></linearGradient></defs><rect x="4.5" y="1.5" width="9" height="8" fill="url(#g24)" stroke="#e2b000"/><path d="M1.5 3.8h4.2L4.2 1.6h3.2L11 5.2 7.4 8.8H4.2L5.7 6.6H1.5z" fill="#f2431e"/><path d="M6 5.2h3.5" stroke="#c01808" stroke-width="0.8"/></svg></div><div class="t" style="left:376px;top:490px;font-size:12px;line-height:18px;color:#000;transform:scaleX(0.955);transform-origin:0 0;">WcState</div><div class="t" style="left:500px;top:490px;font-size:12px;line-height:18px;color:#000;">1</div><div class="t" style="left:620px;top:490px;font-size:12px;line-height:18px;color:#000;transform:scaleX(0.857);transform-origin:0 0;">BIT</div><div class="t" style="left:700px;top:490px;font-size:12px;line-height:18px;color:#000;transform:scaleX(0.851);transform-origin:0 0;">0.1</div><div class="t" style="left:750px;top:490px;font-size:12px;line-height:18px;color:#000;transform:scaleX(0.888);transform-origin:0 0;">1522.1</div><div class="t" style="left:808px;top:490px;font-size:12px;line-height:18px;color:#000;transform:scaleX(1.045);transform-origin:0 0;">Input</div><div class="t" style="left:858px;top:490px;font-size:12px;line-height:18px;color:#000;">0</div><div style="position:absolute;left:357px;top:511px;line-height:0"><svg width="16" height="16" viewBox="0 0 16 16"><defs><linearGradient id="g25" x1="0" y1="0" x2="1" y2="1"><stop offset="0" stop-color="#ffff70"/><stop offset="1" stop-color="#f4d400"/></linearGradient></defs><rect x="4.5" y="1.5" width="9" height="8" fill="url(#g25)" stroke="#e2b000"/><path d="M1.5 3.8h4.2L4.2 1.6h3.2L11 5.2 7.4 8.8H4.2L5.7 6.6H1.5z" fill="#f2431e"/><path d="M6 5.2h3.5" stroke="#c01808" stroke-width="0.8"/></svg></div><div class="t" style="left:376px;top:509px;font-size:12px;line-height:18px;color:#000;transform:scaleX(1.012);transform-origin:0 0;">InputToggle</div><div class="t" style="left:500px;top:509px;font-size:12px;line-height:18px;color:#000;">0</div><div class="t" style="left:620px;top:509px;font-size:12px;line-height:18px;color:#000;transform:scaleX(0.857);transform-origin:0 0;">BIT</div><div class="t" style="left:700px;top:509px;font-size:12px;line-height:18px;color:#000;transform:scaleX(0.851);transform-origin:0 0;">0.1</div><div class="t" style="left:750px;top:509px;font-size:12px;line-height:18px;color:#000;transform:scaleX(0.888);transform-origin:0 0;">1524.1</div><div class="t" style="left:808px;top:509px;font-size:12px;line-height:18px;color:#000;transform:scaleX(1.045);transform-origin:0 0;">Input</div><div class="t" style="left:858px;top:509px;font-size:12px;line-height:18px;color:#000;">0</div><div style="position:absolute;left:357px;top:530px;line-height:0"><svg width="16" height="16" viewBox="0 0 16 16"><defs><linearGradient id="g26" x1="0" y1="0" x2="1" y2="1"><stop offset="0" stop-color="#ffff70"/><stop offset="1" stop-color="#f4d400"/></linearGradient></defs><rect x="4.5" y="1.5" width="9" height="8" fill="url(#g26)" stroke="#e2b000"/><path d="M1.5 3.8h4.2L4.2 1.6h3.2L11 5.2 7.4 8.8H4.2L5.7 6.6H1.5z" fill="#f2431e"/><path d="M6 5.2h3.5" stroke="#c01808" stroke-width="0.8"/></svg></div><div class="t" style="left:376px;top:528px;font-size:12px;line-height:18px;color:#000;transform:scaleX(0.917);transform-origin:0 0;">State</div><div class="t" style="left:500px;top:528px;font-size:12px;line-height:18px;color:#000;transform:scaleX(0.924);transform-origin:0 0;">257</div><div class="t" style="left:620px;top:528px;font-size:12px;line-height:18px;color:#000;transform:scaleX(0.950);transform-origin:0 0;">UINT</div><div class="t" style="left:700px;top:528px;font-size:12px;line-height:18px;color:#000;transform:scaleX(0.851);transform-origin:0 0;">2.0</div><div class="t" style="left:750px;top:528px;font-size:12px;line-height:18px;color:#000;transform:scaleX(0.888);transform-origin:0 0;">1548.0</div><div class="t" style="left:808px;top:528px;font-size:12px;line-height:18px;color:#000;transform:scaleX(1.045);transform-origin:0 0;">Input</div><div class="t" style="left:858px;top:528px;font-size:12px;line-height:18px;color:#000;">0</div><div style="position:absolute;left:357px;top:549px;line-height:0"><svg width="16" height="16" viewBox="0 0 16 16"><defs><linearGradient id="g27" x1="0" y1="0" x2="1" y2="1"><stop offset="0" stop-color="#ffff70"/><stop offset="1" stop-color="#f4d400"/></linearGradient></defs><rect x="4.5" y="1.5" width="9" height="8" fill="url(#g27)" stroke="#e2b000"/><path d="M1.5 3.8h4.2L4.2 1.6h3.2L11 5.2 7.4 8.8H4.2L5.7 6.6H1.5z" fill="#f2431e"/><path d="M6 5.2h3.5" stroke="#c01808" stroke-width="0.8"/><path d="M4.2 9.6H2.2v1.8h2v1.8h-2" fill="none" stroke="#606060" stroke-width="0.9"/></svg></div><div class="t" style="left:376px;top:547px;font-size:12px;line-height:18px;color:#000;">AdsAddr</div><div class="t" style="left:500px;top:547px;font-size:12px;line-height:18px;color:#000;transform:scaleX(0.896);transform-origin:0 0;">10.193.20.16.5.1:1001</div><div class="t" style="left:620px;top:547px;font-size:12px;line-height:18px;color:#000;transform:scaleX(0.933);transform-origin:0 0;">AMSADDR</div><div class="t" style="left:700px;top:547px;font-size:12px;line-height:18px;color:#000;transform:scaleX(0.851);transform-origin:0 0;">8.0</div><div class="t" style="left:750px;top:547px;font-size:12px;line-height:18px;color:#000;transform:scaleX(0.888);transform-origin:0 0;">1550.0</div><div class="t" style="left:808px;top:547px;font-size:12px;line-height:18px;color:#000;transform:scaleX(1.045);transform-origin:0 0;">Input</div><div class="t" style="left:858px;top:547px;font-size:12px;line-height:18px;color:#000;">0</div><div style="position:absolute;left:373px;top:568px;line-height:0"><svg width="16" height="16" viewBox="0 0 16 16"><defs><linearGradient id="g28" x1="0" y1="0" x2="1" y2="1"><stop offset="0" stop-color="#ffff70"/><stop offset="1" stop-color="#f4d400"/></linearGradient></defs><rect x="4.5" y="1.5" width="9" height="8" fill="url(#g28)" stroke="#e2b000"/><path d="M1.5 3.8h4.2L4.2 1.6h3.2L11 5.2 7.4 8.8H4.2L5.7 6.6H1.5z" fill="#f2431e"/><path d="M6 5.2h3.5" stroke="#c01808" stroke-width="0.8"/><path d="M1.5 14V10.5h3V14M1.5 12h3" fill="none" stroke="#606060" stroke-width="0.9"/></svg></div><div class="t" style="left:392px;top:566px;font-size:12px;line-height:18px;color:#000;">netId</div><div class="t" style="left:500px;top:566px;font-size:12px;line-height:18px;color:#000;transform:scaleX(0.890);transform-origin:0 0;">10.193.20.16.5.1</div><div class="t" style="left:620px;top:566px;font-size:12px;line-height:18px;color:#000;transform:scaleX(0.914);transform-origin:0 0;">AMSNETID</div><div class="t" style="left:700px;top:566px;font-size:12px;line-height:18px;color:#000;transform:scaleX(0.851);transform-origin:0 0;">6.0</div><div class="t" style="left:750px;top:566px;font-size:12px;line-height:18px;color:#000;transform:scaleX(0.888);transform-origin:0 0;">1550.0</div><div class="t" style="left:808px;top:566px;font-size:12px;line-height:18px;color:#000;transform:scaleX(1.045);transform-origin:0 0;">Input</div><div class="t" style="left:858px;top:566px;font-size:12px;line-height:18px;color:#000;">0</div><div style="position:absolute;left:373px;top:587px;line-height:0"><svg width="16" height="16" viewBox="0 0 16 16"><defs><linearGradient id="g29" x1="0" y1="0" x2="1" y2="1"><stop offset="0" stop-color="#ffff70"/><stop offset="1" stop-color="#f4d400"/></linearGradient></defs><rect x="4.5" y="1.5" width="9" height="8" fill="url(#g29)" stroke="#e2b000"/><path d="M1.5 3.8h4.2L4.2 1.6h3.2L11 5.2 7.4 8.8H4.2L5.7 6.6H1.5z" fill="#f2431e"/><path d="M6 5.2h3.5" stroke="#c01808" stroke-width="0.8"/></svg></div><div class="t" style="left:392px;top:585px;font-size:12px;line-height:18px;color:#000;transform:scaleX(1.073);transform-origin:0 0;">port</div><div class="t" style="left:500px;top:585px;font-size:12px;line-height:18px;color:#000;transform:scaleX(0.917);transform-origin:0 0;">0x03e9</div><div class="t" style="left:620px;top:585px;font-size:12px;line-height:18px;color:#000;transform:scaleX(0.908);transform-origin:0 0;">WORD</div><div class="t" style="left:700px;top:585px;font-size:12px;line-height:18px;color:#000;transform:scaleX(0.851);transform-origin:0 0;">2.0</div><div class="t" style="left:750px;top:585px;font-size:12px;line-height:18px;color:#000;transform:scaleX(0.888);transform-origin:0 0;">1556.0</div><div class="t" style="left:808px;top:585px;font-size:12px;line-height:18px;color:#000;transform:scaleX(1.045);transform-origin:0 0;">Input</div><div class="t" style="left:858px;top:585px;font-size:12px;line-height:18px;color:#000;">0</div><div style="position:absolute;left:357px;top:606px;line-height:0"><svg width="17" height="16" viewBox="0 0 17 16"><defs><linearGradient id="g30" x1="0" y1="0" x2="1" y2="1"><stop offset="0" stop-color="#f06070"/><stop offset="1" stop-color="#c81020"/></linearGradient></defs><rect x="2.5" y="1.5" width="9" height="8" fill="url(#g30)" stroke="#a00c18"/><path d="M8 3.6h3L9.8 1.6h2.6L16 5.2 12.4 8.8H9.8L11 6.8H8z" fill="#f8c000"/><rect x="1.5" y="7.5" width="6" height="6" fill="#fff" stroke="#8a8a8a"/><path d="M3 12l3.2-3.2M3.8 8.8h2.4v2.4" stroke="#505050" fill="none"/></svg></div><div class="t" style="left:376px;top:604px;font-size:12px;line-height:18px;color:#000;transform:scaleX(0.852);transform-origin:0 0;">LED</div><div class="t" style="left:480px;top:604px;font-size:12px;line-height:18px;color:#000;transform:scaleX(0.936);transform-origin:0 0;">X</div><div class="t" style="left:500px;top:604px;font-size:12px;line-height:18px;color:#000;">0</div><div class="t" style="left:620px;top:604px;font-size:12px;line-height:18px;color:#000;transform:scaleX(0.857);transform-origin:0 0;">BIT</div><div class="t" style="left:700px;top:604px;font-size:12px;line-height:18px;color:#000;transform:scaleX(0.851);transform-origin:0 0;">0.1</div><div class="t" style="left:750px;top:604px;font-size:12px;line-height:18px;color:#000;transform:scaleX(0.895);transform-origin:0 0;">39.0</div><div class="t" style="left:808px;top:604px;font-size:12px;line-height:18px;color:#000;transform:scaleX(1.044);transform-origin:0 0;">Output</div><div class="t" style="left:858px;top:604px;font-size:12px;line-height:18px;color:#000;">0</div><div class="t" style="left:908px;top:604px;font-size:12px;line-height:18px;color:#000;transform:scaleX(0.959);transform-origin:0 0;">MAIN.LedOut . PlcTask ...</div><div style="position:absolute;left:345px;top:6px;width:6px;height:846px;background:linear-gradient(to bottom,#293955 0%,#2f4264 8%,#34476b 25%,#34476b 55%,#30436a 80%,#2a3a57 96%,#293955 100%)"></div><div style="position:absolute;left:351px;top:651px;width:923px;height:6px;background:#2c3d5c"></div><div style="position:absolute;left:351px;top:652px;width:923px;height:4px;background:#30436a"></div><div style="position:absolute;left:351px;top:657px;width:923px;height:175px;background:#a4b0cf"></div><div style="position:absolute;left:352px;top:658px;width:921px;height:21px;background:#4d6082"></div><div class="t" style="left:356px;top:660px;font-size:12px;line-height:18px;color:#fff;transform:scaleX(0.930);transform-origin:0 0;">Error List</div><div style="position:absolute;left:1224px;top:666px;line-height:0"><svg width="8" height="4" viewBox="0 0 8 4" shape-rendering="crispEdges"><path d="M0 0h8l-4 4z" fill="#e8ecf4"/></svg></div><div style="position:absolute;left:1241px;top:662px;line-height:0"><svg width="8" height="11" viewBox="0 0 8 11" shape-rendering="crispEdges"><path d="M2 0h4v1h-0.5v5h1.5v1H0V6h1.5V1H1V0z" fill="#e8ecf4"/><rect x="3" y="7" width="1" height="4" fill="#e8ecf4"/><rect x="2.5" y="1" width="2" height="5" fill="#4d6082"/></svg></div><div style="position:absolute;left:1257px;top:663px;line-height:0"><svg width="10" height="9" viewBox="0 0 10 9" shape-rendering="auto"><path d="M0.5 0.5l9 8M9.5 0.5l-9 8" stroke="#e8ecf4" stroke-width="1.3" fill="none"/></svg></div><div style="position:absolute;left:352px;top:679px;width:921px;height:26px;background:#cfd6e5"></div><div style="position:absolute;left:359px;top:682px;width:150px;height:20px;background:#fff;border:1px solid #cccedb;box-sizing:border-box"></div><div class="t" style="left:363px;top:684px;font-size:12px;line-height:18px;color:#000;transform:scaleX(0.974);transform-origin:0 0;">Entire Solution</div><div style="position:absolute;left:499px;top:691px;line-height:0"><svg width="6" height="3" viewBox="0 0 6 3" shape-rendering="crispEdges"><path d="M0 0h6l-3 3z" fill="#1e1e1e"/></svg></div><div style="position:absolute;left:515px;top:684px;width:1px;height:16px;background:#9aa2b5"></div><div style="position:absolute;left:523px;top:684px;line-height:0"><svg width="15" height="15" viewBox="0 0 15 15" shape-rendering="auto"><circle cx="7.5" cy="7.5" r="7.5" fill="#fff"/><circle cx="7.5" cy="7.5" r="6.5" fill="#e51c23"/><path d="M4.8 4.8l5.4 5.4M10.2 4.8l-5.4 5.4" stroke="#fff" stroke-width="2"/></svg></div><div class="t" style="left:543px;top:684px;font-size:12px;line-height:18px;color:#1e1e1e;transform:scaleX(0.914);transform-origin:0 0;">0 Errors</div><div style="position:absolute;left:593px;top:684px;width:1px;height:16px;background:#9aa2b5"></div><div style="position:absolute;left:601px;top:684px;line-height:0"><svg width="15" height="15" viewBox="0 0 15 15" shape-rendering="auto"><path d="M7.5 0.5L15 14H0z" fill="#ffcc00"/><rect x="6.6" y="5" width="1.8" height="5" fill="#1e1e1e"/><rect x="6.6" y="11" width="1.8" height="1.8" fill="#1e1e1e"/></svg></div><div class="t" style="left:621px;top:684px;font-size:12px;line-height:18px;color:#1e1e1e;transform:scaleX(0.984);transform-origin:0 0;">0 of 1 Warning</div><div style="position:absolute;left:709px;top:684px;width:1px;height:16px;background:#9aa2b5"></div><div style="position:absolute;left:718px;top:684.5px;line-height:0"><svg width="15" height="15" viewBox="0 0 15 15" shape-rendering="auto"><circle cx="7.5" cy="7.5" r="7.5" fill="#fff"/><circle cx="7.5" cy="7.5" r="6.7" fill="#1ba1e2"/><rect x="6.5" y="6.2" width="2" height="5.6" fill="#fff"/><circle cx="7.5" cy="3.9" r="1.2" fill="#fff"/></svg></div><div class="t" style="left:737px;top:684px;font-size:12px;line-height:18px;color:#1e1e1e;transform:scaleX(0.923);transform-origin:0 0;">0 Messages</div><div style="position:absolute;left:808px;top:684px;width:1px;height:16px;background:#9aa2b5"></div><div class="t" style="left:816px;top:684px;font-size:12px;line-height:18px;color:#1e1e1e;transform:scaleX(0.941);transform-origin:0 0;">Clear</div><div style="position:absolute;left:854px;top:684px;width:1px;height:16px;background:#9aa2b5"></div><div style="position:absolute;left:862px;top:682px;width:150px;height:20px;background:#fff;border:1px solid #cccedb;box-sizing:border-box"></div><div class="t" style="left:866px;top:684px;font-size:12px;line-height:18px;color:#000;transform:scaleX(0.974);transform-origin:0 0;">Build + IntelliSense</div><div style="position:absolute;left:1002px;top:691px;line-height:0"><svg width="6" height="3" viewBox="0 0 6 3" shape-rendering="crispEdges"><path d="M0 0h6l-3 3z" fill="#1e1e1e"/></svg></div><div style="position:absolute;left:1073px;top:681px;width:199px;height:21px;background:#fcfcfc;border:1px solid #cccedb;box-sizing:border-box"></div><div class="t" style="left:1078px;top:683px;font-size:12px;line-height:18px;color:#6d6d6d;transform:scaleX(0.929);transform-origin:0 0;">Search Error List</div><div style="position:absolute;left:1245px;top:685px;line-height:0"><svg width="13" height="13" viewBox="0 0 13 13" shape-rendering="auto"><circle cx="8.5" cy="4.5" r="3.7" fill="none" stroke="#5a5a5a" stroke-width="1.5"/><path d="M1 12l4.5-4.5" stroke="#5a5a5a" stroke-width="2"/></svg></div><div style="position:absolute;left:1263px;top:691px;line-height:0"><svg width="6" height="3" viewBox="0 0 6 3" shape-rendering="crispEdges"><path d="M0 0h6l-3 3z" fill="#6d6d6d"/></svg></div><div style="position:absolute;left:352px;top:705px;width:921px;height:22px;background:#f5f5f5"></div><div style="position:absolute;left:352px;top:726px;width:921px;height:1px;background:#cccedb"></div><div style="position:absolute;left:379px;top:705px;width:1px;height:21px;background:#cccedb"></div><div style="position:absolute;left:405px;top:705px;width:1px;height:21px;background:#cccedb"></div><div style="position:absolute;left:918px;top:705px;width:1px;height:21px;background:#cccedb"></div><div style="position:absolute;left:1067px;top:705px;width:1px;height:21px;background:#cccedb"></div><div style="position:absolute;left:1217px;top:705px;width:1px;height:21px;background:#cccedb"></div><div style="position:absolute;left:1253px;top:705px;width:1px;height:21px;background:#cccedb"></div><div style="position:absolute;left:395px;top:709px;line-height:0"><svg width="7" height="6" viewBox="0 0 7 6" shape-rendering="crispEdges"><rect x="0" y="0" width="1" height="1" fill="#333"/><rect x="2" y="0" width="5" height="1" fill="#333"/><rect x="3" y="2" width="4" height="1" fill="#333"/><rect x="4" y="4" width="3" height="1" fill="#333"/><rect x="5" y="5" width="2" height="1" fill="#333"/></svg></div><div class="t" style="left:409px;top:707px;font-size:12px;line-height:18px;color:#1e1e1e;">Description</div><div style="position:absolute;left:477px;top:714px;line-height:0"><svg width="8" height="4" viewBox="0 0 8 4" shape-rendering="crispEdges"><path d="M0 0h8l-4 4z" fill="#1e1e1e"/></svg></div><div class="t" style="left:921px;top:707px;font-size:12px;line-height:18px;color:#1e1e1e;">Project</div><div class="t" style="left:1071px;top:707px;font-size:12px;line-height:18px;color:#1e1e1e;transform:scaleX(0.931);transform-origin:0 0;">File</div><div class="t" style="left:1221px;top:707px;font-size:12px;line-height:18px;color:#1e1e1e;">Line</div><div style="position:absolute;left:352px;top:727px;width:921px;height:104px;background:#fff"></div><div style="position:absolute;left:351px;top:831px;width:57px;height:21px;background:#fff"></div><div class="t" style="left:357px;top:832px;font-size:12px;line-height:18px;color:#1e1e1e;transform:scaleX(0.939);transform-origin:0 0;">Error List</div><div style="position:absolute;left:408px;top:832px;width:51px;height:20px;background:#4d6082"></div><div class="t" style="left:415px;top:833px;font-size:12px;line-height:18px;color:#fff;transform:scaleX(1.032);transform-origin:0 0;">Output</div>
</body></html>
